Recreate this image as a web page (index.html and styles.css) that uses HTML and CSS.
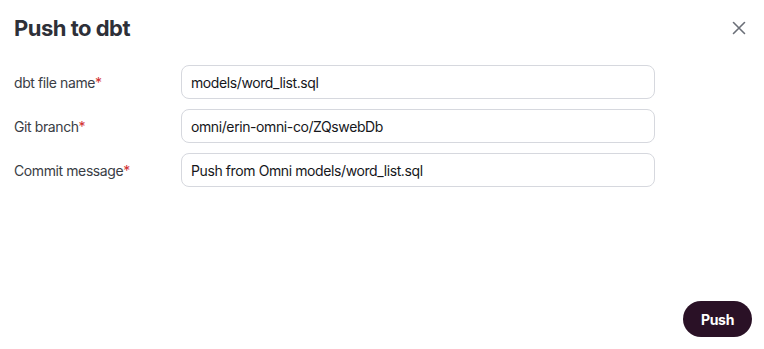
FILE: index.html
```html
<!DOCTYPE html>
<html lang="en">
<head>
  <meta charset="UTF-8" />
  <meta name="viewport" content="width=device-width, initial-scale=1.0"/>
  <title>Push to dbt</title>
  <link rel="stylesheet" href="styles.css">
</head>
<body>

  <div class="dialog">
    <div class="dialog-header">
      <h1>Push to dbt</h1>
      <button class="close" aria-label="Close">
        <svg width="14" height="14" viewBox="0 0 14 14">
          <path d="M1.5 1.5 L12.5 12.5 M12.5 1.5 L1.5 12.5" stroke="#6b6f78" stroke-width="1.6" stroke-linecap="round" fill="none"/>
        </svg>
      </button>
    </div>

    <!-- form fields -->
    <div class="form">
      <label for="file">dbt file name<span class="req">*</span></label>
      <input id="file" type="text" value="models/word_list.sql">

      <label for="branch">Git branch<span class="req">*</span></label>
      <input id="branch" type="text" value="omni/erin-omni-co/ZQswebDb">

      <label for="msg">Commit message<span class="req">*</span></label>
      <input id="msg" type="text" value="Push from Omni models/word_list.sql">
    </div>

    <div class="dialog-footer">
      <button class="push">Push</button>
    </div>
  </div>

</body>
</html>
```

FILE: styles.css
```css
body {
  margin: 0;
  font-family: 'Inter', 'Noto Sans', sans-serif;
  background: #fff;
  color: #2e3038;
}

.dialog {
  width: 764px;
  height: 349px;
  box-sizing: border-box;
  padding: 13px 12px 0 14px;
  display: flex;
  flex-direction: column;
}

.dialog-header {
  display: flex;
  justify-content: space-between;
  align-items: center;
  height: 30px;
}

h1 {
  margin: 0;
  font-size: 22px;
  line-height: 30px;
  font-weight: 700;
  color: #2e3038;
  letter-spacing: -0.5px;
}

.close {
  border: none;
  background: none;
  padding: 0;
  margin-right: 6px;
  width: 14px;
  height: 14px;
  cursor: pointer;
}

.close svg {
  display: block;
}

.form {
  margin-top: 22px;
  display: grid;
  grid-template-columns: 167px 474px;
  row-gap: 10px;
  align-items: center;
}

.form label {
  font-size: 14px;
  color: #3a3d45;
  letter-spacing: -0.4px;
}

.req {
  color: #d2302f;
}

.form input {
  height: 34px;
  box-sizing: border-box;
  border: 1px solid #d6d8de;
  border-radius: 8px;
  padding: 0 9px;
  font-family: inherit;
  font-size: 14px;
  letter-spacing: -0.4px;
  color: #16171b;
  outline: none;
}

.dialog-footer {
  margin-top: auto;
  margin-bottom: 12px;
  display: flex;
  justify-content: flex-end;
}

.push {
  background: #2a1126;
  color: #fff;
  border: none;
  border-radius: 18px;
  height: 36px;
  width: 69px;
  font-family: inherit;
  font-size: 14px;
  font-weight: 700;
  letter-spacing: -0.3px;
  cursor: pointer;
}
```
